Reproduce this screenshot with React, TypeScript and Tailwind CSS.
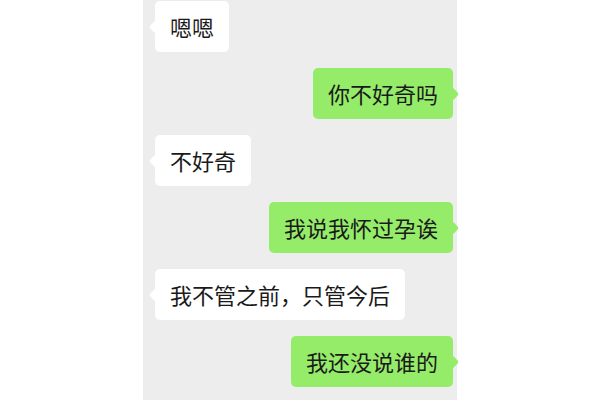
import React from "react";

type Msg = { text: string; mine: boolean };

const MESSAGES: Msg[] = [
  { text: "嗯嗯", mine: false },
  { text: "你不好奇吗", mine: true },
  { text: "不好奇", mine: false },
  { text: "我说我怀过孕诶", mine: true },
  { text: "我不管之前，只管今后", mine: false },
  { text: "我还没说谁的", mine: true },
];

const Bubble: React.FC<Msg> = ({ text, mine }) => (
  <div className={mine ? "flex justify-end pr-[4px]" : "flex justify-start pl-[12px]"}>
    <div
      className={
        "relative rounded-[5px] px-[15px] py-[12px] text-[22px] leading-[27px] text-[#1a1a1a] " +
        (mine ? "bg-[#95ec69]" : "bg-white")
      }
    >
      <span
        className={
          "absolute top-1/2 -mt-[5px] h-[10px] w-[10px] rotate-45 rounded-[2px] " +
          (mine ? "-right-[4px] bg-[#95ec69]" : "-left-[4px] bg-white")
        }
      />
      <span className="relative whitespace-nowrap">{text}</span>
    </div>
  </div>
);

export default function App() {
  return (
    <div
      className="flex h-[400px] w-[600px] justify-center overflow-hidden bg-white"
      style={{ fontFamily: '"Noto Sans CJK SC", "Noto Sans", sans-serif' }}
    >
      <div className="flex h-full w-[314px] flex-col gap-[16px] bg-[#ededed] pt-px">
        {MESSAGES.map((m, i) => (
          <Bubble key={i} {...m} />
        ))}
      </div>
    </div>
  );
}
